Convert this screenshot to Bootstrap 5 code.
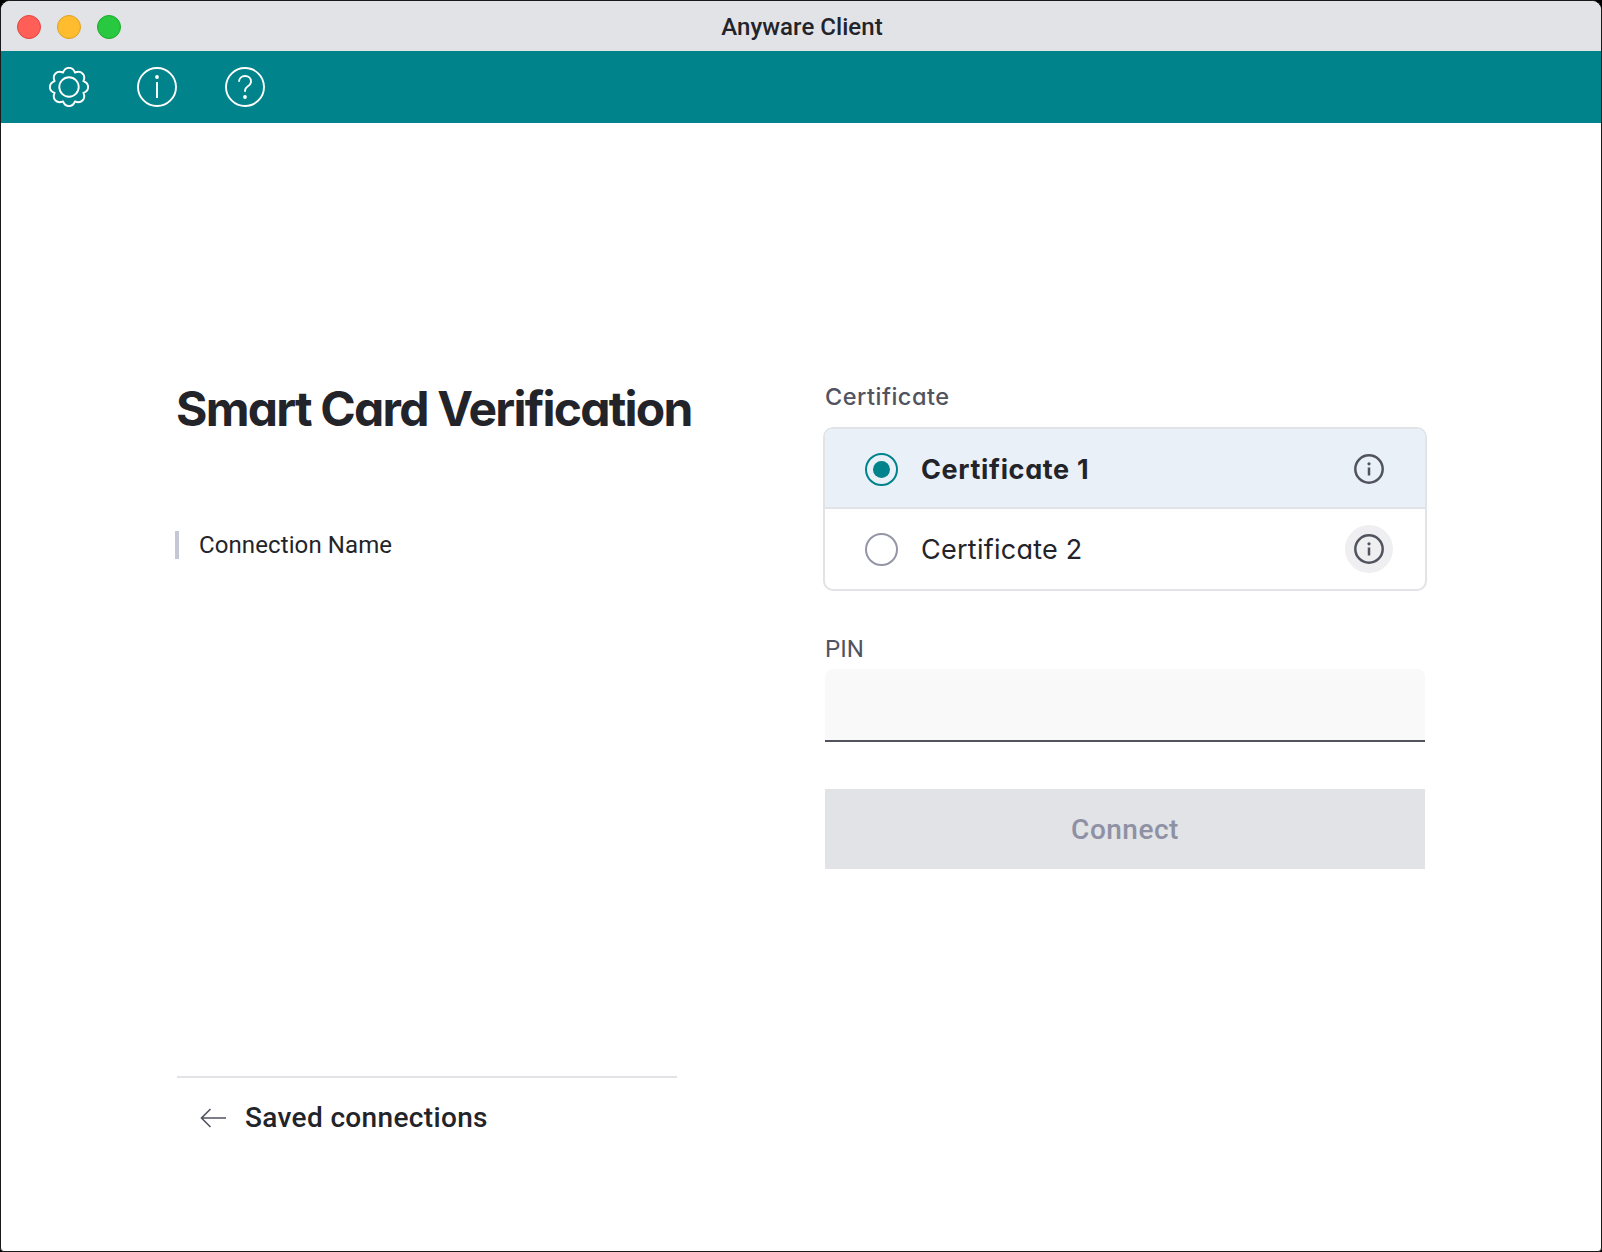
<!DOCTYPE html>
<html lang="en">
<head>
<meta charset="utf-8">
<title>Anyware Client</title>
<link href="https://cdn.jsdelivr.net/npm/bootstrap@5.3.0/dist/css/bootstrap.min.css" rel="stylesheet">
<style>
html,body{margin:0;height:1252px;background:#000;overflow:hidden}
body{font-family:Roboto,"Liberation Sans",sans-serif;color:#23242a}
.win-frame{width:1602px;height:1252px;background:#fff;border:1px solid #1a1a1a;border-radius:10px 10px 4px 4px;overflow:hidden}
.win-title{height:50px;background:#e2e3e7;padding:2px 0 0 16px}
.win-title-text{font:500 24px/1 Roboto,sans-serif;color:#23242a;margin-top:1px;margin-left:1px;letter-spacing:.05px}
.traffic{width:24px;height:24px;border-radius:50%;border:1px solid}
.t-red{background:#ff5f57;border-color:#e0443e}
.t-yellow{background:#febc2e;border-color:#dea123}
.t-green{background:#28c840;border-color:#1aab29}
.traffic-row{gap:16px}
.tool-strip{height:72px;background:#00838a;padding-left:48px;gap:48px}
.main-area{height:1127px}
.col-left{width:824px;padding:0 0 0 176px}
.col-right{width:601px;padding-top:261px}
.page-head{font:650 48px/1.2 Inter,sans-serif;font-feature-settings:"cv11";letter-spacing:-1.76px;color:#23242a;margin:0 0 0 -1px;padding-top:257px}
.conn-name{margin-top:93px;margin-left:-2px;border-left:4px solid #c5c8d4;height:28px;padding-left:20px;font:400 24px/28px Roboto,sans-serif;letter-spacing:.1px;color:#23242a}
.back-row{margin-top:auto;width:500px;border-top:2px solid #e2e3e7;height:82px;margin-bottom:92px;padding-left:23px;gap:18px;font:500 28px/1 Roboto,sans-serif;letter-spacing:.35px;color:#23242a}
.field-label{font:500 23.5px/26px Inter,sans-serif;font-feature-settings:"cv11";color:#51535f;margin:0 0 17px 0;letter-spacing:.5px}
.cert-box{border:2px solid #e2e3e7;border-radius:10px;overflow:hidden;width:604px;margin-left:-2px}
.cert-row{height:80px;padding:0 32px 0 40px}
.cert-on{background:#e9f0f8;border-bottom:2px solid #e2e3e7;height:80px;padding-top:2px}
.cert-name{font:400 27px/1 Inter,sans-serif;font-feature-settings:"cv11";letter-spacing:.25px;color:#23242a;margin-left:23px}
.cert-on .cert-name{font-weight:700;letter-spacing:.65px}
.radio-mark{width:33px;height:33px;flex:none;border-radius:50%;border:2px solid #9496a8;background:#fff}
.cert-on .radio-mark{border-color:#00838a;background:transparent}
.radio-dot{width:17px;height:17px;border-radius:50%;background:#00838a}
.info-btn{width:48px;height:48px;border-radius:50%}
.info-hover{background:#efeff1}
.pin-label{font:400 24px/28px Roboto,sans-serif;color:#51535f;margin:44px 0 6px 0}
.pin-input{height:73px;width:600px;background:#f9f9f9;border:0;border-bottom:2px solid #51535f;border-radius:8px 8px 0 0;display:block}
.connect-btn,.connect-btn:disabled{margin-top:47px;width:600px;height:80px;background:#e2e3e7;border:0;border-radius:0;color:#8e91a3;font:500 28px/1 Roboto,sans-serif;letter-spacing:.5px;opacity:1;padding-top:7px}
</style>
</head>
<body>
<div class="win-frame d-flex flex-column">
  <div class="win-title position-relative d-flex align-items-center">
    <div class="d-flex traffic-row">
      <span class="traffic t-red"></span><span class="traffic t-yellow"></span><span class="traffic t-green"></span>
    </div>
    <div class="win-title-text position-absolute top-50 start-50 translate-middle">Anyware Client</div>
  </div>
  <nav class="tool-strip d-flex align-items-center">
    <svg width="40" height="40" viewBox="0 0 40 40" fill="none" stroke="#fff" stroke-width="1.9" stroke-linejoin="round"><path d="M14.03 5.59C16.35-.68 23.65-.68 25.97 5.59C32.05 2.8 37.2 7.95 34.41 14.03C40.68 16.35 40.68 23.65 34.41 25.97C37.2 32.05 32.05 37.2 25.97 34.41C23.65 40.68 16.35 40.68 14.03 34.41C7.95 37.2 2.8 32.05 5.59 25.97C-.68 23.65-.68 16.35 5.59 14.03C2.8 7.95 7.95 2.8 14.03 5.59Z"/><circle cx="20" cy="20" r="9.7"/></svg>
    <svg width="40" height="40" viewBox="0 0 40 40" fill="none" stroke="#fff" stroke-width="1.9"><circle cx="20" cy="20" r="19"/><circle cx="20" cy="10" r="1.9" fill="#fff" stroke="none"/><path d="M20 15v16"/></svg>
    <svg width="40" height="40" viewBox="0 0 40 40" fill="none" stroke="#fff" stroke-width="1.9"><circle cx="20" cy="20" r="19"/><path d="M14 14.8c0-3.400 2.600-5.800 6-5.800s6 2.300 6 5.400c0 2.500-1.500 3.700-3.200 4.900-1.800 1.200-2.800 2.200-2.800 4.500v1"/><circle cx="20" cy="30" r="1.9" fill="#fff" stroke="none"/></svg>
  </nav>
  <div class="main-area d-flex">
    <section class="col-left d-flex flex-column">
      <h1 class="page-head">Smart Card Verification</h1>
      <div class="conn-name">Connection Name</div>
      <div class="back-row d-flex align-items-center">
        <svg width="27" height="20" viewBox="0 0 27 20" fill="none" stroke="#51535f" stroke-width="1.6"><path d="M26 10H1.500M10.500 1 1.500 10l9 9"/></svg>
        <span>Saved connections</span>
      </div>
    </section>
    <section class="col-right">
      <div class="field-label">Certificate</div>
      <div class="cert-box">
        <div class="cert-row cert-on d-flex align-items-center">
          <span class="radio-mark d-flex align-items-center justify-content-center"><span class="radio-dot"></span></span>
          <span class="cert-name flex-grow-1">Certificate 1</span>
          <span class="info-btn d-flex align-items-center justify-content-center">
            <svg width="30" height="30" viewBox="0 0 30 30" fill="none" stroke="#51535f" stroke-width="2.5"><circle cx="15" cy="15" r="13.7"/><circle cx="15" cy="9.8" r="1.6" fill="#51535f" stroke="none"/><path d="M15 13.500v8"/></svg>
          </span>
        </div>
        <div class="cert-row d-flex align-items-center">
          <span class="radio-mark"></span>
          <span class="cert-name flex-grow-1">Certificate 2</span>
          <span class="info-btn info-hover d-flex align-items-center justify-content-center">
            <svg width="30" height="30" viewBox="0 0 30 30" fill="none" stroke="#51535f" stroke-width="2.5"><circle cx="15" cy="15" r="13.7"/><circle cx="15" cy="9.8" r="1.6" fill="#51535f" stroke="none"/><path d="M15 13.500v8"/></svg>
          </span>
        </div>
      </div>
      <div class="pin-label">PIN</div>
      <input class="pin-input" type="password" aria-label="PIN">
      <button class="btn connect-btn" disabled>Connect</button>
    </section>
  </div>
</div>
<script src="https://cdn.jsdelivr.net/npm/bootstrap@5.3.0/dist/js/bootstrap.bundle.min.js"></script>
</body>
</html>
